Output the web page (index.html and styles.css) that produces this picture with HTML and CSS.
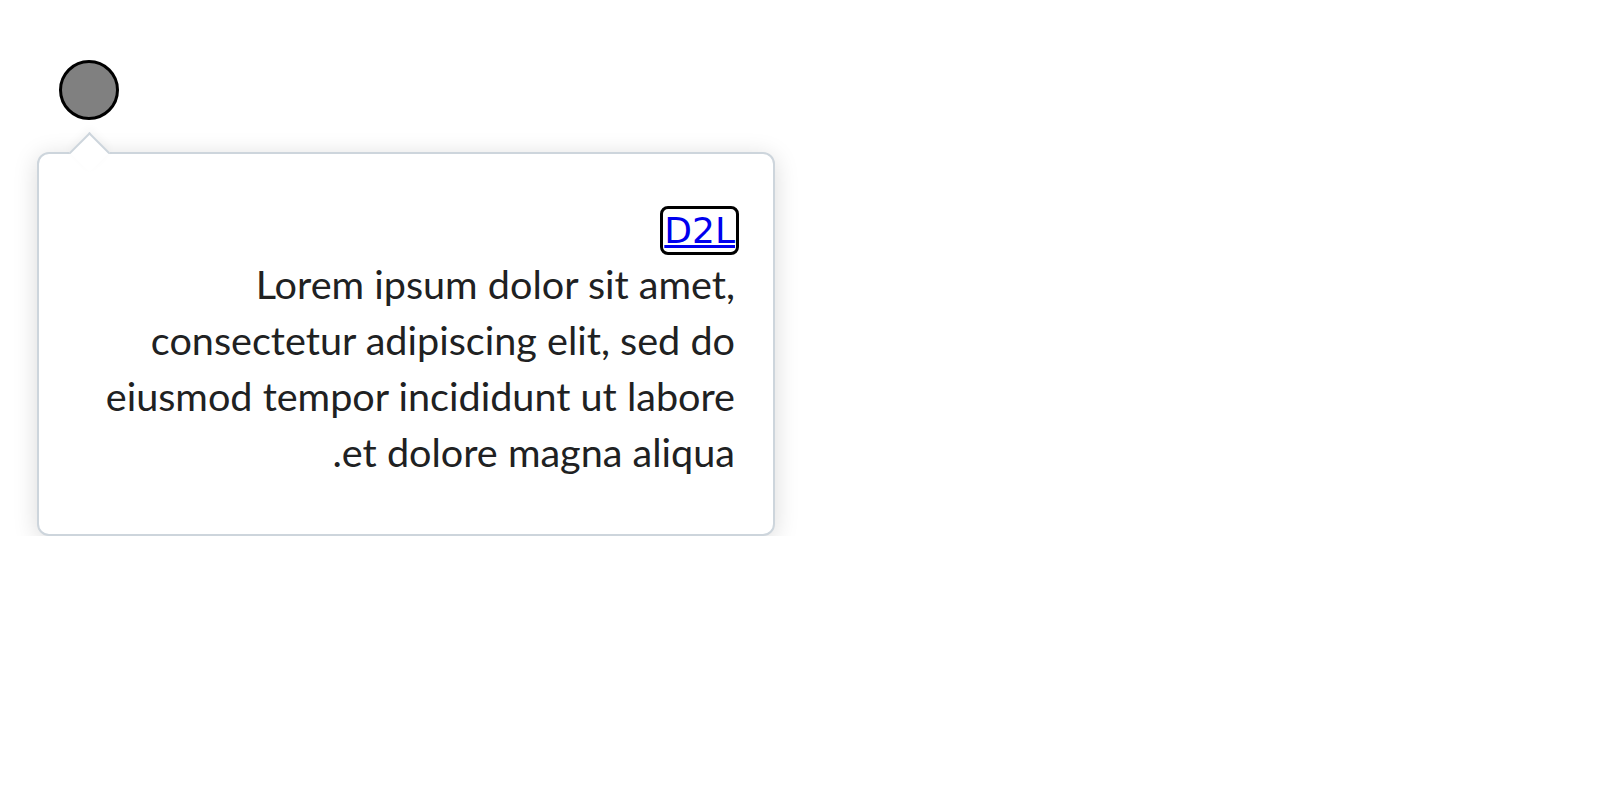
FILE: index.html
```html
<!DOCTYPE html>
<html lang="ar" dir="ltr">
<head>
<meta charset="utf-8">
<title>Tooltip</title>
<link rel="stylesheet" href="styles.css">
</head>
<body>
<div class="page">
  <div class="target"></div>
  <div class="tooltip" dir="rtl">
    <span class="pointer"></span>
    <div class="tooltip-content">
      <div class="link-row"><a class="link" href="#">D2L</a></div>
      <div class="text">Lorem ipsum dolor sit amet, consectetur adipiscing elit, sed do eiusmod tempor incididunt ut labore et dolore magna aliqua.</div>
    </div>
  </div>
</div>
</body>
</html>
```
FILE: styles.css
```css
html, body {
  margin: 0;
  padding: 0;
  background: #ffffff;
}

.page {
  padding: 60px 0 0 37px;
}

.target {
  width: 60px;
  height: 60px;
  box-sizing: border-box;
  border: 3px solid #000000;
  border-radius: 50%;
  background: #808080;
  margin-left: 22px;
}

.tooltip {
  position: relative;
  margin-top: 32px;
  width: 738px;
  box-sizing: border-box;
  border: 2px solid #cdd5dc;
  border-radius: 12px;
  background: #ffffff;
  box-shadow: 0 4px 24px rgba(0, 0, 0, 0.15);
  padding: 44px 38px 54px 38px;
  font-family: Lato, "Liberation Sans", sans-serif;
  font-size: 39.6px;
  line-height: 56px;
  color: #202122;
  text-align: right;
}

.pointer {
  position: absolute;
  left: 36px;
  top: -16px;
  width: 29px;
  height: 29px;
  box-sizing: border-box;
  background: #ffffff;
  border-top: 2px solid #cdd5dc;
  border-left: 2px solid #cdd5dc;
  transform: rotate(45deg);
  box-shadow: -3px -3px 8px rgba(0, 0, 0, 0.04);
}

.tooltip-content {
  position: relative;
}

.link-row {
  height: 58px;
}

.link {
  font-family: "DejaVu Sans", sans-serif;
  font-size: 36px;
  vertical-align: -2px;
  color: #0000ee;
  text-decoration: underline;
  outline: 3px solid #000000;
  outline-offset: 1px;
  border-radius: 4px;
}
```
